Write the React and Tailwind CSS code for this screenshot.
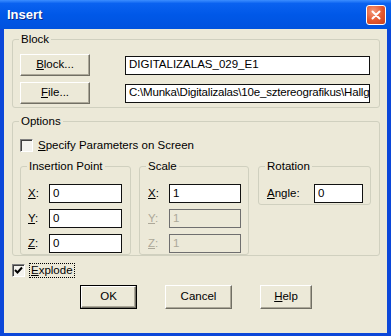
import React from 'react'

const font = { fontFamily: '"Liberation Sans", Arial, sans-serif' }

function U({ children }) {
  return <span className="underline underline-offset-[1px]">{children}</span>
}

function Btn({ children, def, className = '' }) {
  return (
    <div
      className={`flex items-center justify-center bg-[#ECE9D8] text-black ${
        def ? 'border border-black' : ''
      } ${className}`}
    >
      <div className="flex h-full w-full items-center justify-center border border-t-white border-l-white border-r-[#716F64] border-b-[#716F64] shadow-[inset_-1px_-1px_0_#ACA899]">
        {children}
      </div>
    </div>
  )
}

function Field({ value, disabled, className = '' }) {
  return (
    <div
      className={`flex h-[19px] items-center overflow-hidden whitespace-nowrap border pl-[3px] ${
        disabled ? 'border-[#6f6f6f] bg-[#ECE9D8] text-[#ACA899]' : 'border-[#111] bg-white text-black'
      } ${className}`}
    >
      {value}
    </div>
  )
}

function Group({ label, className = '', children }) {
  return (
    <div className={`relative rounded-[3px] border border-[#D0D0BF] ${className}`}>
      <span className="absolute left-[6px] top-[-8px] bg-[#ECE9D8] px-[2px] leading-[14px]">{label}</span>
      {children}
    </div>
  )
}

function Check({ checked }) {
  return (
    <div className="flex h-[13px] w-[13px] items-center justify-center border border-t-[#808080] border-l-[#808080] border-r-white border-b-white bg-[#f4f3ee] shadow-[inset_1px_1px_0_#404040]">
      {checked && (
        <svg width="9" height="9" viewBox="0 0 9 9">
          <path d="M1 4 L3.5 6.5 L8 1.5" stroke="#000" strokeWidth="2" fill="none" />
        </svg>
      )}
    </div>
  )
}

function Row({ label, value, disabled, fieldW }) {
  return (
    <div className="flex h-[19px] items-center">
      <span className={`w-[21px] ${disabled ? 'text-[#ACA899]' : ''}`}>
        <U>{label}</U>:
      </span>
      <Field value={value} disabled={disabled} className={fieldW} />
    </div>
  )
}

export default function App() {
  return (
    <div style={font} className="flex h-[336px] w-[391px] flex-col bg-[#0B47D9] text-[11.5px] text-black">
      {/* title bar */}
      <div className="flex h-[29px] items-center justify-between bg-[linear-gradient(to_bottom,#3C8EFF_0%,#0A62F0_12%,#0058E8_50%,#0052DE_100%)] pl-[7px] pr-[5px]">
        <span className="text-[13px] font-bold text-white [text-shadow:1px_1px_0_#0A2A8A]">Insert</span>
        <div className="flex h-[20px] w-[20px] items-center justify-center rounded-[3px] border border-white bg-[radial-gradient(circle_at_35%_30%,#F49A7A_0%,#E2562E_55%,#C7401C_100%)]">
          <svg width="10" height="10" viewBox="0 0 10 10">
            <path d="M1.5 1.5 L8.5 8.5 M8.5 1.5 L1.5 8.5" stroke="#fff" strokeWidth="2" strokeLinecap="round" />
          </svg>
        </div>
      </div>

      {/* client */}
      <div className="mx-[4px] mb-[3px] flex flex-1 flex-col bg-[#ECE9D8] px-[8px]">
        <Group label="Block" className="mt-[10px] h-[69px] w-[368px]">
          <div className="flex flex-col gap-[6px] pl-[7px] pr-[9px] pt-[14px]">
            <div className="flex h-[22px] items-center justify-between">
              <Btn className="h-[22px] w-[70px]">
                <span>
                  <U>B</U>lock...
                </span>
              </Btn>
              <Field value="DIGITALIZALAS_029_E1" className="w-[245px]" />
            </div>
            <div className="flex h-[22px] items-center justify-between">
              <Btn className="h-[22px] w-[70px]">
                <span>
                  <U>F</U>ile...
                </span>
              </Btn>
              <Field value="C:\Munka\Digitalizalas\10e_sztereografikus\Hallg" className="w-[245px] tracking-[-0.2px]" />
            </div>
          </div>
        </Group>

        <Group label="Options" className="mt-[13px] h-[135px] w-[368px]">
          <div className="flex flex-col pl-[7px] pt-[15px]">
            <div className="flex items-center gap-[5px]">
              <Check />
              <span>
                <U>S</U>pecify Parameters on Screen
              </span>
            </div>
            <div className="mt-[12px] flex items-start">
              <Group label="Insertion Point" className="h-[89px] w-[111px]">
                <div className="flex flex-col gap-[6px] pl-[7px] pt-[17px]">
                  <Row label="X" value="0" fieldW="w-[73px]" />
                  <Row label="Y" value="0" fieldW="w-[73px]" />
                  <Row label="Z" value="0" fieldW="w-[73px]" />
                </div>
              </Group>
              <Group label="Scale" className="ml-[8px] h-[89px] w-[110px]">
                <div className="flex flex-col gap-[6px] pl-[8px] pt-[17px]">
                  <Row label="X" value="1" fieldW="w-[72px]" />
                  <Row label="Y" value="1" disabled fieldW="w-[72px]" />
                  <Row label="Z" value="1" disabled fieldW="w-[72px]" />
                </div>
              </Group>
              <Group label="Rotation" className="ml-[9px] h-[39px] w-[113px]">
                <div className="mt-[17px] flex h-[19px] items-center pl-[8px]">
                  <span className="w-[47px]">
                    <U>A</U>ngle:
                  </span>
                  <Field value="0" className="w-[49px]" />
                </div>
              </Group>
            </div>
          </div>
        </Group>

        <div className="mt-[7px] flex items-center gap-[4px]">
          <Check checked />
          <span className="border border-dotted border-black px-[1px] leading-[13px]">
            <U>E</U>xplode
          </span>
        </div>

        <div className="mt-[7px] flex pl-[68px]">
          <Btn def className="h-[24px] w-[57px]">OK</Btn>
          <Btn className="ml-[28px] h-[24px] w-[67px]">Cancel</Btn>
          <Btn className="ml-[28px] h-[24px] w-[52px]">
            <span>
              <U>H</U>elp
            </span>
          </Btn>
        </div>
      </div>
    </div>
  )
}
